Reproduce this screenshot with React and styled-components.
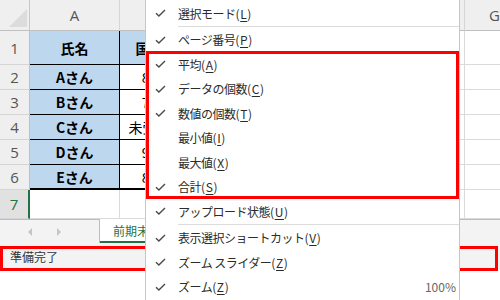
import React from 'react';
import styled, { createGlobalStyle, css } from 'styled-components';

const Global = createGlobalStyle`
  html, body { margin: 0; padding: 0; background: #fff; }
  body { font-family: "Noto Sans CJK JP", "Noto Sans", sans-serif; overflow: hidden; }
  * { box-sizing: border-box; }
`;

const Screen = styled.div`
  position: relative;
  width: 500px;
  height: 300px;
  overflow: hidden;
  background: #fff;
  display: flex;
  flex-direction: column;
`;

const Sheet = styled.div`
  flex: none;
  display: grid;
  grid-template-columns: 30px 90px 60px 71px 71px 71px 72px 60px;
  grid-template-rows: 31px 34px repeat(5, 25px) 29px;
  width: 525px;
  height: 219px;
`;

const cellKinds = {
  corner: css`
    position: relative;
    background: #efefef;
    border-right: 1px solid #c8c8c8;
    border-bottom: 1px solid #c0c0c0;
    &::after {
      content: '';
      position: absolute;
      right: 2px;
      bottom: 3px;
      width: 0;
      height: 0;
      border-left: 18px solid transparent;
      border-bottom: 18px solid #dcdcdc;
    }
  `,
  colHead: css`
    background: #efefef;
    color: #555;
    font-family: "Open Sans", "Noto Sans", sans-serif;
    font-size: 15px;
    border-right: 1px solid #d5d5d5;
    border-bottom: 1px solid #c0c0c0;
  `,
  rowHead: css`
    background: #efefef;
    color: #555;
    font-family: "Open Sans", "Noto Sans", sans-serif;
    font-size: 15px;
    border-right: 1px solid #c0c0c0;
    border-bottom: 1px solid #d5d5d5;
  `,
  label: css`
    background: #bdd7ee;
    color: #000;
    font-weight: 700;
    font-size: 14px;
    border-right: 1px solid #000;
    border-bottom: 1px solid #000;
  `,
  value: css`
    background: #fff;
    color: #000;
    font-size: 14px;
    border-right: 1px solid #000;
    border-bottom: 1px solid #000;
  `,
  empty: css`
    background: #fff;
    border-right: 1px solid #dadada;
    border-bottom: 1px solid #dadada;
  `,
};

const Cell = styled.div`
  display: flex;
  align-items: center;
  justify-content: center;
  white-space: nowrap;
  overflow: hidden;
  ${(p) => cellKinds[p.$kind]}
  ${(p) => p.$last && css`border-bottom: 2px solid #000;`}
  ${(p) =>
    p.$active &&
    css`
      background: #e1e1e1;
      color: #217346;
      border-right: 2px solid #217346;
    `}
`;

const TabBar = styled.div`
  flex: none;
  display: flex;
  height: 24px;
  background: #f3f3f3;
  border-top: 1px solid #bdbdbd;
`;

const NavArea = styled.div`
  width: 100px;
  display: flex;
  align-items: center;
  padding-left: 28px;
  gap: 25px;
  border-right: 1px solid #bdbdbd;
`;

const NavArrow = styled.span`
  width: 0;
  height: 0;
  border-top: 4px solid transparent;
  border-bottom: 4px solid transparent;
  ${(p) =>
    p.$dir === 'left'
      ? css`border-right: 4px solid #c4c4c4;`
      : css`border-left: 4px solid #c4c4c4;`}
`;

const SheetTab = styled.div`
  margin-top: -1px;
  width: 92px;
  background: #fff;
  border-bottom: 2px solid #217346;
  color: #217346;
  font-size: 12px;
  display: flex;
  align-items: center;
  padding-left: 13px;
  white-space: nowrap;
`;

const StatusBar = styled.div`
  flex: none;
  height: 27px;
  background: #f3f3f3;
  display: flex;
  align-items: center;
  padding-left: 10px;
  font-size: 12px;
  color: #333;
`;

const Menu = styled.div`
  position: absolute;
  left: 145px;
  top: -1px;
  width: 315px;
  height: 302px;
  background: #fff;
  border: 1px solid #c6c6c6;
  padding-top: 1px;
  display: flex;
  flex-direction: column;
`;

const Item = styled.div`
  flex: none;
  height: 24.5px;
  display: flex;
  align-items: center;
  font-size: 12px;
  color: #2b2b2b;
  white-space: nowrap;
`;

const CheckSlot = styled.span`
  width: 32px;
  flex: none;
  display: flex;
  align-items: center;
  padding-left: 9px;
`;

const ItemLabel = styled.span`
  flex: 1;
  letter-spacing: -0.5px;
`;

const Key = styled.span`
  letter-spacing: 0.6px;
  u { text-underline-offset: 2px; }
`;

const ItemValue = styled.span`
  padding-right: 3px;
  color: #666;
`;

const Separator = styled.div`
  flex: none;
  height: 2px;
  margin-left: 32px;
  border-top: 1px solid #dcdcdc;
`;

const Highlight = styled.div`
  position: absolute;
  border: 3px solid #ff0000;
  pointer-events: none;
`;

const Check = () => (
  <svg width="11" height="8" viewBox="0 0 11 8">
    <path d="M1 4.2 L3.9 7 L10 1" fill="none" stroke="#4a4a4a" strokeWidth="1.4" />
  </svg>
);

const rows = [
  ['氏名', '国語'],
  ['Aさん', '85'],
  ['Bさん', '72'],
  ['Cさん', '未受験'],
  ['Dさん', '90'],
  ['Eさん', '88'],
];

// Column letters B–F sit under the open menu, so only A and G are shown.
const cols = ['A', '', '', '', '', '', 'G'];

const menuItems = [
  { label: '選択モード', key: 'L', checked: true, sepAfter: true },
  { label: 'ページ番号', key: 'P', checked: true },
  { label: '平均', key: 'A', checked: true },
  { label: 'データの個数', key: 'C', checked: true },
  { label: '数値の個数', key: 'T', checked: true },
  { label: '最小値', key: 'I', checked: false },
  { label: '最大値', key: 'X', checked: false },
  { label: '合計', key: 'S', checked: true },
  { label: 'アップロード状態', key: 'U', checked: true, sepAfter: true },
  { label: '表示選択ショートカット', key: 'V', checked: true },
  { label: 'ズーム スライダー', key: 'Z', checked: true },
  { label: 'ズーム', key: 'Z', checked: true, value: '100%' },
];

export default function App() {
  const cells = [];
  cells.push(<Cell key="corner" $kind="corner" />);
  cols.forEach((c, ci) =>
    cells.push(
      <Cell key={'h' + ci} $kind="colHead">
        {c}
      </Cell>
    )
  );
  for (let r = 0; r < 7; r++) {
    cells.push(
      <Cell key={'r' + r} $kind="rowHead" $active={r === 6}>
        {r + 1}
      </Cell>
    );
    cols.forEach((c, ci) => {
      const data = rows[r];
      if (data && ci < 2) {
        const kind = ci === 0 || r === 0 ? 'label' : 'value';
        cells.push(
          <Cell key={r + '-' + ci} $kind={kind} $last={r === 5}>
            {data[ci]}
          </Cell>
        );
      } else {
        cells.push(<Cell key={r + '-' + ci} $kind="empty" />);
      }
    });
  }

  return (
    <Screen>
      <Global />
      <Sheet>{cells}</Sheet>
      <TabBar>
        <NavArea>
          <NavArrow $dir="left" />
          <NavArrow $dir="right" />
        </NavArea>
        <SheetTab>前期末成績</SheetTab>
      </TabBar>
      <StatusBar>準備完了</StatusBar>
      <Highlight style={{ left: 0, top: 246, width: 498, height: 25 }} />
      <Menu>
        {menuItems.map((it, i) => (
          <React.Fragment key={i}>
            <Item>
              <CheckSlot>{it.checked && <Check />}</CheckSlot>
              <ItemLabel>
                {it.label}
                <Key>
                  (<u>{it.key}</u>)
                </Key>
              </ItemLabel>
              {it.value && <ItemValue>{it.value}</ItemValue>}
            </Item>
            {it.sepAfter && <Separator />}
          </React.Fragment>
        ))}
      </Menu>
      <Highlight style={{ left: 146, top: 51, width: 313, height: 148 }} />
    </Screen>
  );
}
